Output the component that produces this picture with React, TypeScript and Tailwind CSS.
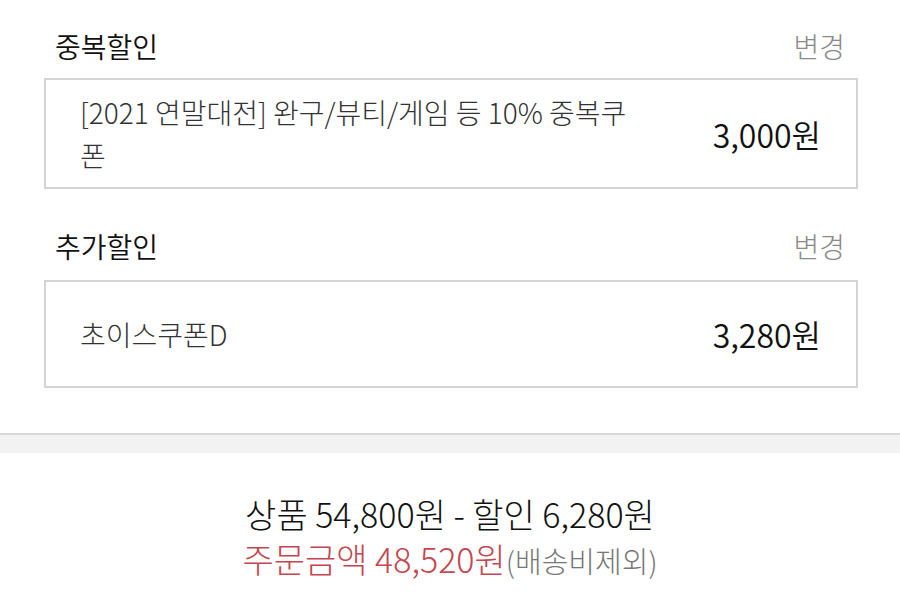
import React from "react";

const font = { fontFamily: '"Noto Sans CJK KR", "Noto Sans", sans-serif' };

function Header({ title }: { title: string }) {
  return (
    <div className="flex items-center justify-between pl-[55px] pr-[55px] h-[46px]">
      <span className="text-[28px] text-[#111] font-[350]">{title}</span>
      <span className="text-[28px] text-[#8a8a8a] font-light">변경</span>
    </div>
  );
}

export default function App() {
  return (
    <div style={font} className="w-[900px] h-[599px] bg-white overflow-hidden">
      <div className="pt-[23px]">
        <Header title="중복할인" />
        <div className="ml-[44px] mr-[42px] mt-[9px] h-[111px] border-2 border-[#d4d4d4] flex items-center justify-between pl-[34px] pr-[35px]">
          <div className="text-[28px] leading-[43px] text-[#333] font-light">
            [2021 연말대전] 완구/뷰티/게임 등 10% 중복쿠
            <br />폰
          </div>
          <div className="text-[32px] text-[#111] font-[350]">3,000원</div>
        </div>
        <div className="h-[34px]" />
        <Header title="추가할인" />
        <div className="ml-[44px] mr-[42px] mt-[11px] h-[108px] border-2 border-[#d4d4d4] flex items-center justify-between pl-[34px] pr-[35px]">
          <div className="text-[28px] text-[#333] font-light">초이스쿠폰D</div>
          <div className="text-[32px] text-[#111] font-[350]">3,280원</div>
        </div>
      </div>
      <div className="mt-[45px] border-t-2 border-[#d8d8d8] bg-[#f2f2f2] h-[20px]" />
      <div className="flex flex-col items-center pt-[38px]">
        <div className="text-[34px] leading-[45px] text-[#111] font-light">
          상품 54,800원 - 할인 6,280원
        </div>
        <div className="leading-[45px] font-light">
          <span className="text-[34px] text-[#c4464e]">주문금액 48,520원</span>
          <span className="text-[29px] text-[#777]">(배송비제외)</span>
        </div>
      </div>
    </div>
  );
}
